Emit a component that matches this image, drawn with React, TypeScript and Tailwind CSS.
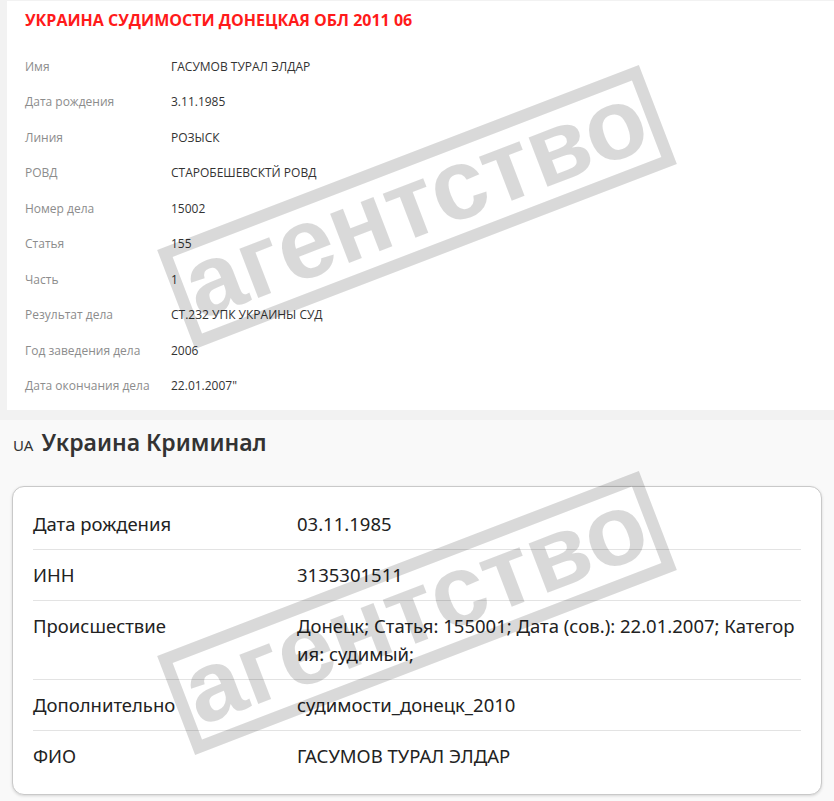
import React from 'react';

const topRows = [
  { label: "Имя", value: "ГАСУМОВ ТУРАЛ ЭЛДАР" },
  { label: "Дата рождения", value: "3.11.1985" },
  { label: "Линия", value: "РОЗЫСК" },
  { label: "РОВД", value: "СТАРОБЕШЕВСКТЙ РОВД" },
  { label: "Номер дела", value: "15002" },
  { label: "Статья", value: "155" },
  { label: "Часть", value: "1" },
  { label: "Результат дела", value: "СТ.232 УПК УКРАИНЫ СУД" },
  { label: "Год заведения дела", value: "2006" },
  { label: "Дата окончания дела", value: "22.01.2007\"" },
];

const crimeRows = [
  { label: "Дата рождения", value: "03.11.1985" },
  { label: "ИНН", value: "3135301511" },
  { label: "Происшествие", value: "Донецк; Статья: 155001; Дата (сов.): 22.01.2007; Категория: судимый;" },
  { label: "Дополнительно", value: "судимости_донецк_2010" },
  { label: "ФИО", value: "ГАСУМОВ ТУРАЛ ЭЛДАР" },
];

const Stamp: React.FC<{ top: string }> = ({ top }) => (
  <div
    className={`pointer-events-none absolute left-[159px] ${top} flex h-[106px] w-[516px] -rotate-[21deg] items-center justify-center border-[12px] border-black/15`}
  >
    <span className="font-['Liberation_Sans',Arial,sans-serif] text-[100px] font-bold leading-none text-black/15 -mt-[14px]">
      агентство
    </span>
  </div>
);

export default function App() {
  return (
    <div className="relative min-h-screen overflow-hidden bg-[#f9f9f9]">
      <div className="bg-[#f2f2f2] pl-[7px] pt-px pb-[10px]">
        <div className="bg-white pl-[18px] pt-[7px] pb-[6px] font-['Open_Sans',sans-serif]">
          <h2 className="text-[16px] font-bold leading-6 text-[#ff1a1a]">УКРАИНА СУДИМОСТИ ДОНЕЦКАЯ ОБЛ 2011 06</h2>
          <div className="mt-[17px]">
            {topRows.map((row) => (
              <div key={row.label} className="flex h-[35.5px] items-center text-[12px]">
                <div className="w-[146px] text-[#8c8c8c]">{row.label}</div>
                <div className="font-medium text-[#333]">{row.value}</div>
              </div>
            ))}
          </div>
        </div>
      </div>

      <section className="px-3 pb-4 font-['Noto_Sans',sans-serif] text-[#222]">
        <h3 className="flex items-baseline gap-2 pl-px pt-[5px] text-[#333]">
          <span className="text-[15px]">UA</span>
          <span className="text-[23px] font-semibold">Украина Криминал</span>
        </h3>
        <div className="mt-[26px] rounded-xl border border-[#c9c9c9] bg-white px-5 pt-3 pb-[13px] shadow-[0_1px_3px_rgba(0,0,0,0.15)]">
          {crimeRows.map((row, i) => (
            <div
              key={row.label}
              className={`grid grid-cols-[264px_1fr] py-[11px] text-[18.5px] leading-[28px] ${i < crimeRows.length - 1 ? 'border-b border-[#e3e3e3]' : ''}`}
            >
              <div>{row.label}</div>
              <div className="break-all">{row.value}</div>
            </div>
          ))}
        </div>
      </section>

      <Stamp top="top-[154px]" />
      <Stamp top="top-[560px]" />
    </div>
  );
}
